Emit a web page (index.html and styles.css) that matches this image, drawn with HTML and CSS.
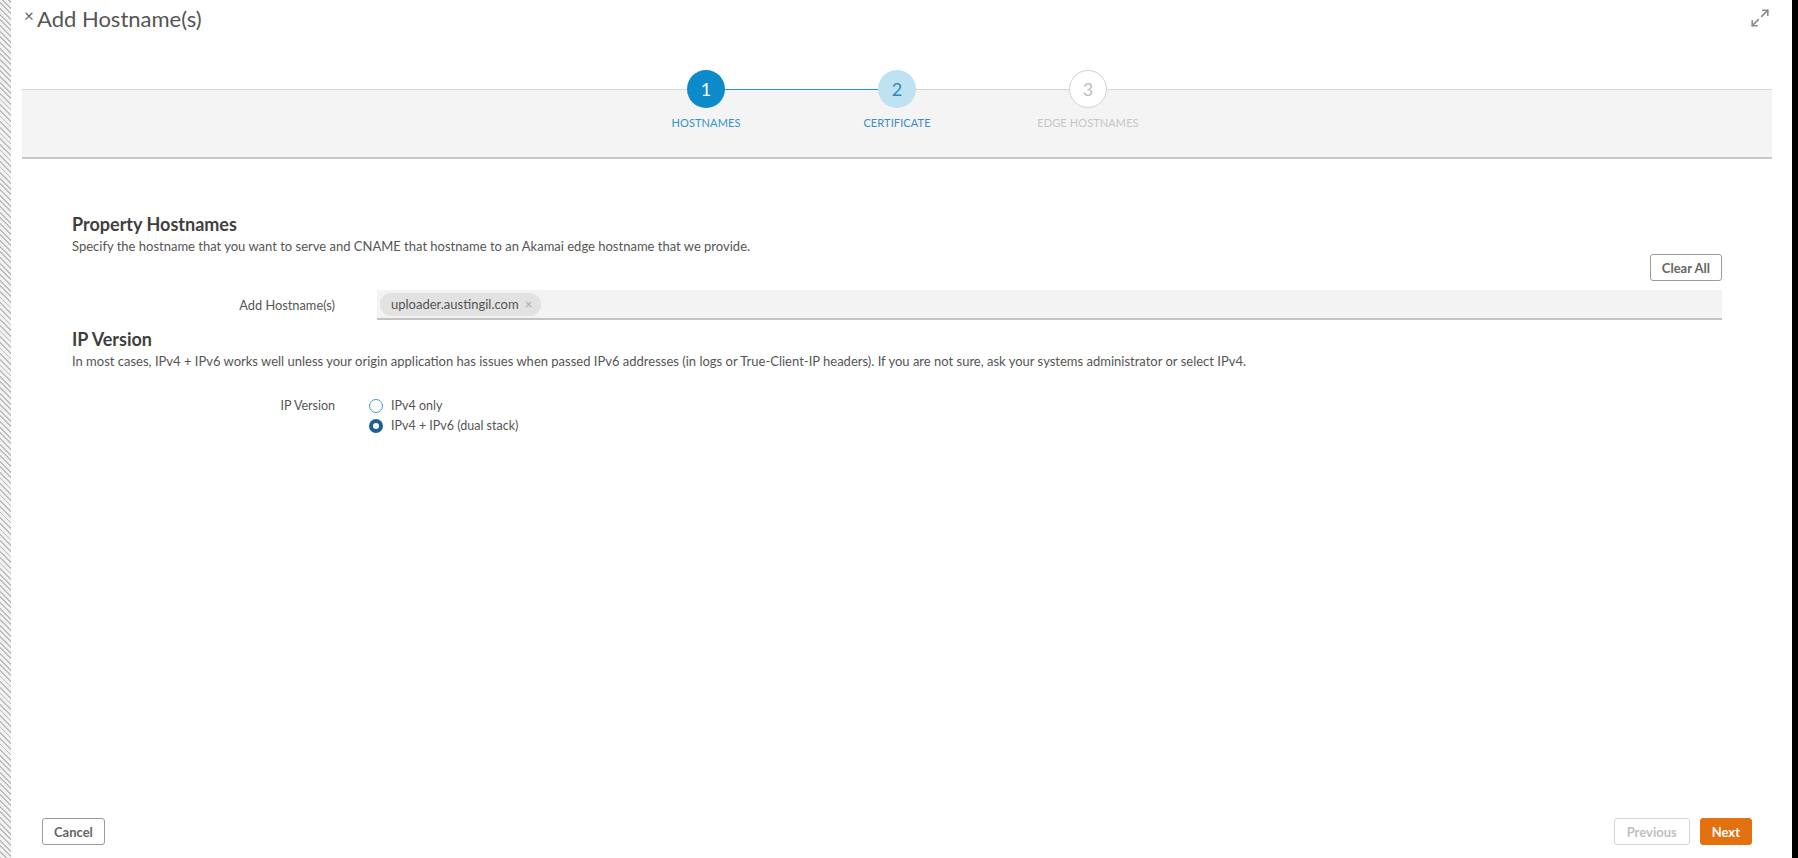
FILE: index.html
```html
<!DOCTYPE html>
<html lang="en">
<head>
<meta charset="utf-8">
<title>Add Hostname(s)</title>
<link rel="stylesheet" href="styles.css">
</head>
<body>
<div class="screen">
  <div class="hatch"></div>
  <div class="dialog">
    <header class="titlebar">
      <div class="title"><span class="close">×</span><span class="title-text">Add Hostname(s)</span></div>
      <svg class="expand" width="20" height="20" viewBox="0 0 18 18" fill="none" stroke="#8a8a8a" stroke-width="1.5" stroke-linecap="round" stroke-linejoin="round">
        <path d="M10.5 7.5 L16 2"/><path d="M11.5 2 H16 V6.5"/>
        <path d="M7.5 10.5 L2 16"/><path d="M2 11.5 V16 H6.5"/>
      </svg>
    </header>

    <div class="stepband">
      <ol class="steps">
        <li class="step done"><span class="dot">1</span><span class="label">HOSTNAMES</span></li>
        <li class="step current"><span class="dot">2</span><span class="label">CERTIFICATE</span></li>
        <li class="step todo"><span class="dot">3</span><span class="label">EDGE HOSTNAMES</span></li>
      </ol>
    </div>

    <main class="content">
      <section class="sect">
        <h2 class="sect-title">Property Hostnames</h2>
        <p class="sect-desc">Specify the hostname that you want to serve and CNAME that hostname to an Akamai edge hostname that we provide.</p>
        <div class="toolbar"><button class="btn">Clear All</button></div>
        <div class="form-row">
          <label class="form-label">Add Hostname(s)</label>
          <div class="tag-input">
            <span class="chip">uploader.austingil.com <span class="chip-x">×</span></span>
          </div>
        </div>
      </section>

      <section class="sect">
        <h2 class="sect-title">IP Version</h2>
        <p class="sect-desc">In most cases, IPv4 + IPv6 works well unless your origin application has issues when passed IPv6 addresses (in logs or True-Client-IP headers). If you are not sure, ask your systems administrator or select IPv4.</p>
        <div class="form-row radios-row">
          <span class="form-label">IP Version</span>
          <div class="radios">
            <label class="radio"><span class="rb"></span>IPv4 only</label>
            <label class="radio"><span class="rb on"></span>IPv4 + IPv6 (dual stack)</label>
          </div>
        </div>
      </section>
    </main>

    <footer class="footer">
      <button class="btn">Cancel</button>
      <div class="footer-right">
        <button class="btn disabled">Previous</button>
        <button class="btn primary">Next</button>
      </div>
    </footer>
  </div>
</div>
</body>
</html>
```

FILE: styles.css
```css
* { box-sizing: border-box; }
html { margin: 0; padding: 0; background: #000; }
body {
  margin: 0;
  padding: 0;
  font-family: Lato, "Open Sans", "Liberation Sans", sans-serif;
  color: #444;
  background: #000;
}
.screen {
  display: flex;
  height: 858px;
  width: 1798px;
  overflow: hidden;
  background: #fff;
  border-right: 6px solid #000;
}
.hatch {
  width: 11px;
  flex: none;
  background: repeating-linear-gradient(45deg, #bdbdbd 0 1.3px, #f2f2f2 1.3px 4px);
}
.dialog {
  flex: 1;
  min-width: 0;
  display: flex;
  flex-direction: column;
  padding: 0 20px 0 11px;
}
.titlebar {
  height: 89px;
  flex: none;
  display: flex;
  justify-content: space-between;
  align-items: flex-start;
  padding: 0 0 0 2px;
}
.title {
  display: flex;
  align-items: flex-start;
  padding-top: 6px;
}
.close {
  font-size: 17px;
  color: #666;
  line-height: 1;
  margin-top: 1px;
  width: 13px;
}
.title-text {
  font-size: 22px;
  color: #555;
  line-height: 26px;
}
.expand { margin-top: 8px; margin-right: 2px; }

.stepband {
  height: 70px;
  flex: none;
  background: #f4f4f4;
  border-top: 1px solid #dadada;
  border-bottom: 2px solid #c9c9c9;
}
.steps {
  list-style: none;
  margin: 0;
  padding: 0;
  display: flex;
  justify-content: center;
}
.step {
  width: 191px;
  display: flex;
  flex-direction: column;
  align-items: center;
  position: relative;
}
.step::after {
  content: "";
  position: absolute;
  left: 50%;
  width: 191px;
  top: -1px;
  height: 1px;
  background: #d6d6d6;
  z-index: 0;
}
.step.done::after { background: #2c93cc; }
.step.todo::after { display: none; }
.dot {
  width: 38px;
  height: 38px;
  border-radius: 50%;
  margin-top: -20px;
  display: flex;
  align-items: center;
  justify-content: center;
  font-size: 18px;
  position: relative;
  z-index: 1;
}
.done .dot { background: #0c8ac9; color: #fff; }
.current .dot { background: #bfe2f3; color: #2e86c1; }
.todo .dot { background: #fff; color: #bdbdbd; border: 1.5px solid #d2d2d2; }
.label {
  font-size: 11px;
  margin-top: 8px;
  letter-spacing: 0.1px;
}
.done .label { color: #3393cb; }
.current .label { color: #3f8cc4; }
.todo .label { color: #c6c6c6; }

.content {
  flex: 1;
  padding: 55px 50px 0 50px;
}
.sect-title {
  margin: 0;
  font-size: 18px;
  font-weight: 700;
  color: #3f3f3f;
  line-height: 20px;
}
.sect-desc {
  margin: 4px 0 0;
  font-size: 13px;
  color: #555;
  line-height: 16px;
}
.toolbar {
  display: flex;
  justify-content: flex-end;
  margin-top: 0;
}
.btn {
  font-family: Lato, "Open Sans", "Liberation Sans", sans-serif;
  font-size: 13px;
  font-weight: 700;
  color: #666;
  background: #fff;
  border: 1px solid #9c9c9c;
  border-radius: 3px;
  height: 27px;
  padding: 0 11px;
}
.form-row {
  display: flex;
  align-items: center;
  gap: 42px;
  margin-top: 9px;
}
.form-label {
  width: 263px;
  text-align: right;
  font-size: 12.8px;
  color: #555;
}
.tag-input {
  flex: 1;
  height: 30px;
  background: #f3f3f3;
  border-bottom: 2px solid #c3c3c3;
  display: flex;
  align-items: center;
  padding-left: 3px;
}
.chip {
  height: 23px;
  border-radius: 12px;
  background: #e2e2e2;
  display: inline-flex;
  align-items: center;
  padding: 0 9px 0 11px;
  font-size: 13px;
  color: #555;
  gap: 6px;
}
.chip-x { color: #aaa; font-size: 13px; }
.sect + .sect { margin-top: 9px; }
.radios-row {
  align-items: flex-start;
  margin-top: 29px;
}
.radios-row .form-label { line-height: 16px; font-size: 12.5px; }
.radios {
  display: flex;
  flex-direction: column;
  gap: 4px;
  margin-left: -8px;
}
.radio {
  display: flex;
  align-items: center;
  font-size: 12.5px;
  color: #555;
  line-height: 16px;
  gap: 8px;
}
.rb {
  width: 14px;
  height: 14px;
  border-radius: 50%;
  border: 1.5px solid #3d9ad6;
  background: #fff;
}
.rb.on {
  border: 4px solid #1e5f93;
}
.footer {
  display: flex;
  justify-content: space-between;
  align-items: center;
  padding: 0 0 13px 20px;
  margin-right: 20px;
}
.footer-right { display: flex; gap: 10px; }
.btn.disabled { color: #c0c0c0; border-color: #d6d6d6; padding: 0 12px; }
.btn.primary { background: #e3710f; border-color: #e3710f; color: #fff; padding: 0 11px; }
```
